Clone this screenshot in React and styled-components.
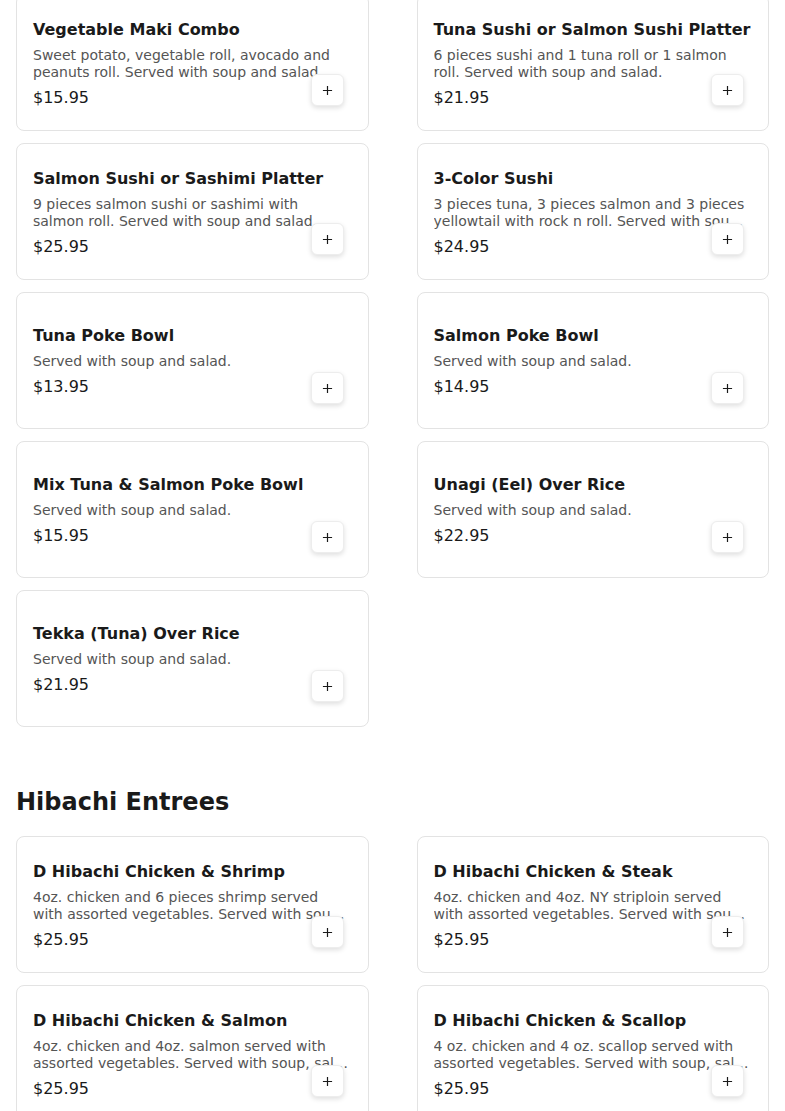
import React from 'react';
import styled, { createGlobalStyle } from 'styled-components';

const GlobalStyle = createGlobalStyle`
  html, body {
    margin: 0;
    padding: 0;
    background: #fff;
  }
  body {
    font-family: 'DejaVu Sans', 'Liberation Sans', sans-serif;
    color: #1a1a1a;
  }
  * {
    box-sizing: border-box;
  }
`;

const sushi = [
  {
    name: 'Vegetable Maki Combo',
    desc: 'Sweet potato, vegetable roll, avocado and peanuts roll. Served with soup and salad.',
    price: '$15.95',
  },
  {
    name: 'Tuna Sushi or Salmon Sushi Platter',
    desc: '6 pieces sushi and 1 tuna roll or 1 salmon roll. Served with soup and salad.',
    price: '$21.95',
  },
  {
    name: 'Salmon Sushi or Sashimi Platter',
    desc: '9 pieces salmon sushi or sashimi with salmon roll. Served with soup and salad.',
    price: '$25.95',
  },
  {
    name: '3-Color Sushi',
    desc: '3 pieces tuna, 3 pieces salmon and 3 pieces yellowtail with rock n roll. Served with soup and salad.',
    price: '$24.95',
  },
  { name: 'Tuna Poke Bowl', desc: 'Served with soup and salad.', price: '$13.95' },
  { name: 'Salmon Poke Bowl', desc: 'Served with soup and salad.', price: '$14.95' },
  { name: 'Mix Tuna & Salmon Poke Bowl', desc: 'Served with soup and salad.', price: '$15.95' },
  { name: 'Unagi (Eel) Over Rice', desc: 'Served with soup and salad.', price: '$22.95' },
  { name: 'Tekka (Tuna) Over Rice', desc: 'Served with soup and salad.', price: '$21.95' },
];

const hibachi = [
  {
    name: 'D Hibachi Chicken & Shrimp',
    desc: '4oz. chicken and 6 pieces shrimp served with assorted vegetables. Served with soup, salad and fried rice.',
    price: '$25.95',
  },
  {
    name: 'D Hibachi Chicken & Steak',
    desc: '4oz. chicken and 4oz. NY striploin served with assorted vegetables. Served with soup, salad and fried rice.',
    price: '$25.95',
  },
  {
    name: 'D Hibachi Chicken & Salmon',
    desc: '4oz. chicken and 4oz. salmon served with assorted vegetables. Served with soup, salad and fried rice.',
    price: '$25.95',
  },
  {
    name: 'D Hibachi Chicken & Scallop',
    desc: '4 oz. chicken and 4 oz. scallop served with assorted vegetables. Served with soup, salad and fried rice.',
    price: '$25.95',
  },
];

const PlusIcon = () => (
  <svg width='11' height='11' viewBox='0 0 12 12' fill='none'>
    <path d='M6 1v10M1 6h10' stroke='#1a1a1a' strokeWidth='1.3' />
  </svg>
);

const MenuCard = ({ item }) => (
  <Card>
    <Info>
      <Name>{item.name}</Name>
      <Desc>{item.desc}</Desc>
      <Price>{item.price}</Price>
    </Info>
    <AddBtn aria-label={`Add ${item.name}`}>
      <PlusIcon />
    </AddBtn>
  </Card>
);

const App = () => (
  <>
    <GlobalStyle />
    <Page>
      <Grid>
        {sushi.map((item) => (
          <MenuCard key={item.name} item={item} />
        ))}
      </Grid>
      <Section>
        <SectionTitle>Hibachi Entrees</SectionTitle>
        <Grid>
          {hibachi.map((item) => (
            <MenuCard key={item.name} item={item} />
          ))}
        </Grid>
      </Section>
    </Page>
  </>
);

export default App;

const Page = styled.div`
  padding: 0 16px 40px;
  margin-top: -6px;
`;

const Grid = styled.div`
  display: grid;
  grid-template-columns: 1fr 1fr;
  column-gap: 48px;
  row-gap: 12px;
`;

const Section = styled.section`
  margin-top: 59px;
`;

const SectionTitle = styled.h2`
  margin: 0 0 18px;
  font-size: 24px;
  line-height: 32px;
  font-weight: 700;
  color: #1a1a1a;
`;

const Card = styled.div`
  position: relative;
  height: 137px;
  padding: 2px 16px 0;
  border: 1px solid #e3e3e3;
  border-radius: 8px;
  background: #fff;
  display: flex;
  align-items: center;
`;

const Info = styled.div`
  display: flex;
  flex-direction: column;
  width: 100%;
`;

const Name = styled.h3`
  margin: 0 0 5px;
  font-size: 16px;
  line-height: 24px;
  font-weight: 700;
  color: #1a1a1a;
`;

const Desc = styled.p`
  margin: 0 0 5px;
  font-size: 14px;
  line-height: 17px;
  color: #555;
  display: -webkit-box;
  -webkit-line-clamp: 2;
  -webkit-box-orient: vertical;
  overflow: hidden;
`;

const Price = styled.span`
  font-size: 16px;
  line-height: 24px;
  color: #1a1a1a;
`;

const AddBtn = styled.button`
  position: absolute;
  right: 24px;
  bottom: 24px;
  width: 33px;
  height: 32px;
  padding: 0;
  border: 1px solid #ededed;
  border-radius: 6px;
  background: #fff;
  box-shadow: 0 2px 5px rgba(0, 0, 0, 0.13);
  display: flex;
  align-items: center;
  justify-content: center;
  cursor: pointer;
`;
